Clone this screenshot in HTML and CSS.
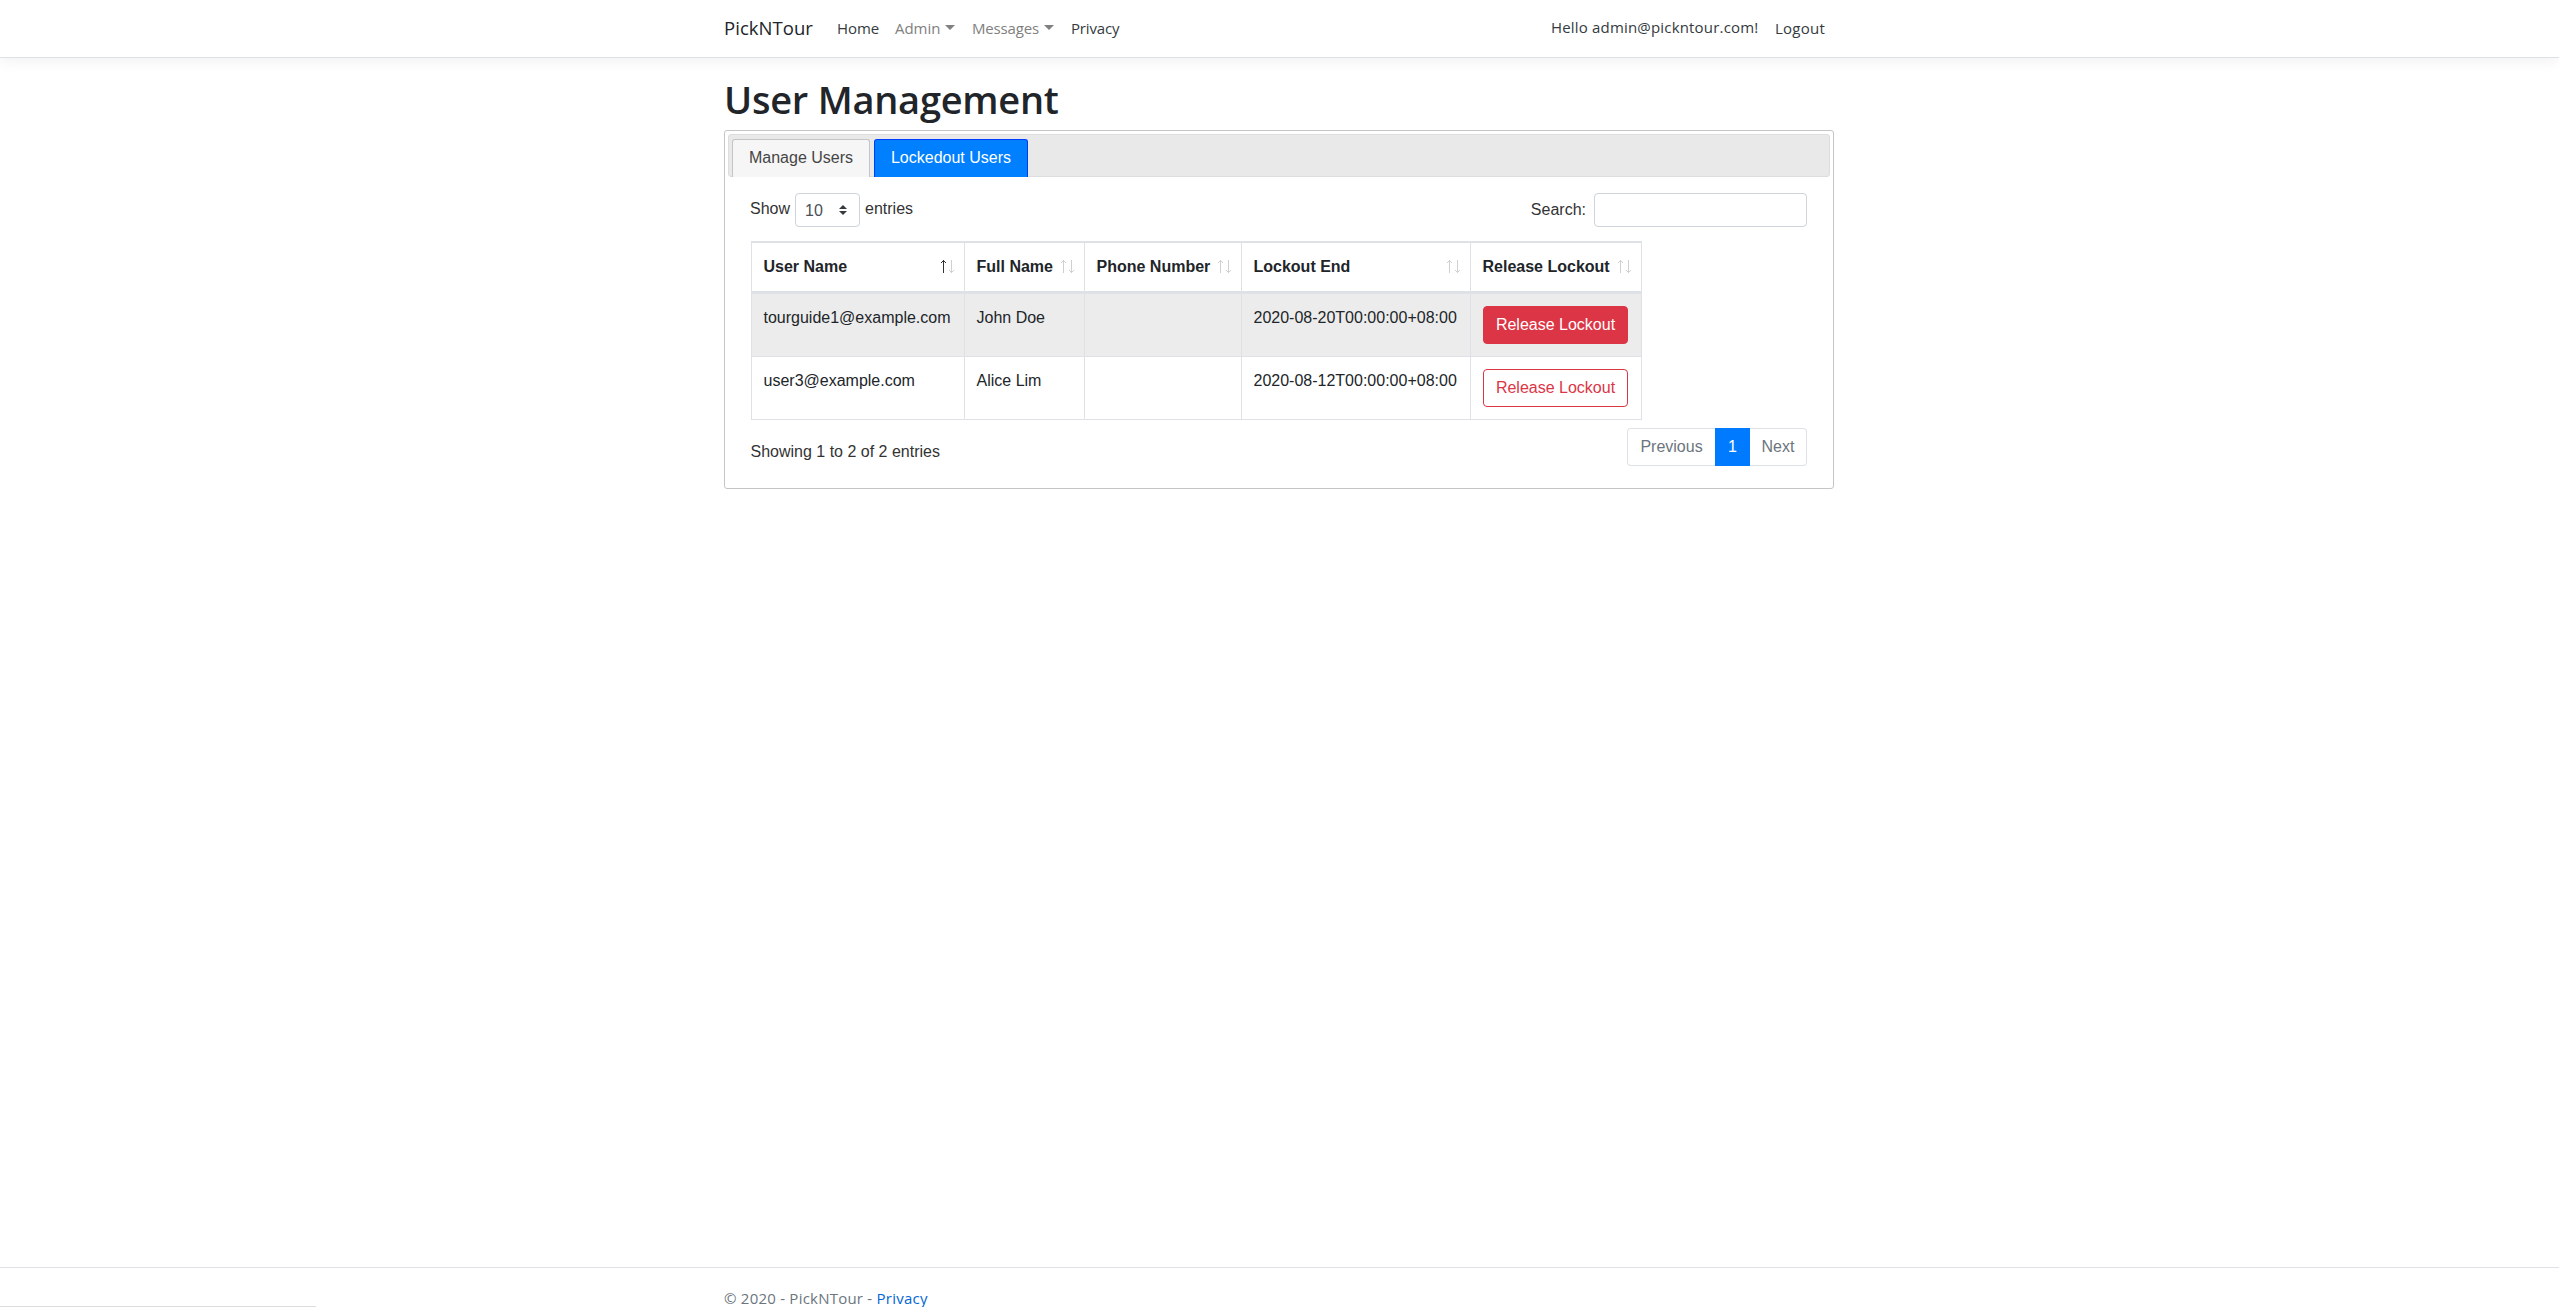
FILE: index.html
```html
<!DOCTYPE html>
<html lang="en">
<head>
<meta charset="utf-8">
<title>User Management - PickNTour</title>
<link rel="stylesheet" href="styles.css">
</head>
<body>
<header class="site-header">
  <nav class="container navbar">
    <a class="brand">PickNTour</a>
    <a class="nav-link home">Home</a>
    <a class="nav-link muted admin">Admin<i class="caret"></i></a>
    <a class="nav-link muted messages">Messages<i class="caret"></i></a>
    <a class="nav-link privacy">Privacy</a>
    <span class="hello">Hello admin@pickntour.com!</span>
    <a class="nav-link logout">Logout</a>
  </nav>
</header>
<main class="container main">
  <h1><span>User Management</span></h1>
  <section class="tabs">
    <div class="tab-bar">
      <a class="tab first">Manage Users</a>
      <a class="tab active">Lockedout Users</a>
    </div>
    <div class="panel">
      <div class="controls">
        <label class="length">Show
          <span class="select">10
            <svg width="8" height="10" viewBox="0 0 4 5"><path fill="#343a40" d="M2 0L0 2h4zm0 5L0 3h4z"/></svg>
          </span>
          entries</label>
        <label class="search">Search:<input type="text"></label>
      </div>
      <table>
        <colgroup><col class="c-user"><col class="c-name"><col class="c-phone"><col class="c-end"><col class="c-release"></colgroup>
        <thead>
          <tr>
            <th><div>User Name<svg class="sort" width="14" height="13" viewBox="0 0 14 13"><g class="on"><path d="M3.5 0v13"/><path d="M1 3L3.5 .5L6 3"/></g><g><path d="M11.5 0v13"/><path d="M9 10l2.5 2.5l2.5-2.5"/></g></svg></div></th>
            <th><div>Full Name<svg class="sort" width="14" height="13" viewBox="0 0 14 13"><g><path d="M3.5 0v13"/><path d="M1 3L3.5 .5L6 3"/></g><g><path d="M11.5 0v13"/><path d="M9 10l2.5 2.5l2.5-2.5"/></g></svg></div></th>
            <th><div>Phone Number<svg class="sort" width="14" height="13" viewBox="0 0 14 13"><g><path d="M3.5 0v13"/><path d="M1 3L3.5 .5L6 3"/></g><g><path d="M11.5 0v13"/><path d="M9 10l2.5 2.5l2.5-2.5"/></g></svg></div></th>
            <th><div>Lockout End<svg class="sort" width="14" height="13" viewBox="0 0 14 13"><g><path d="M3.5 0v13"/><path d="M1 3L3.5 .5L6 3"/></g><g><path d="M11.5 0v13"/><path d="M9 10l2.5 2.5l2.5-2.5"/></g></svg></div></th>
            <th><div>Release Lockout<svg class="sort" width="14" height="13" viewBox="0 0 14 13"><g><path d="M3.5 0v13"/><path d="M1 3L3.5 .5L6 3"/></g><g><path d="M11.5 0v13"/><path d="M9 10l2.5 2.5l2.5-2.5"/></g></svg></div></th>
          </tr>
        </thead>
        <tbody>
          <tr class="hover"><td>tourguide1@example.com</td><td>John Doe</td><td></td><td>2020-08-20T00:00:00+08:00</td><td><button class="btn solid">Release Lockout</button></td></tr>
          <tr><td>user3@example.com</td><td>Alice Lim</td><td></td><td>2020-08-12T00:00:00+08:00</td><td><button class="btn">Release Lockout</button></td></tr>
        </tbody>
      </table>
      <div class="table-footer">
        <div class="info">Showing 1 to 2 of 2 entries</div>
        <div class="pagination"><a class="prev">Previous</a><a class="current">1</a><a class="next">Next</a></div>
      </div>
    </div>
  </section>
</main>
<footer class="site-footer">
  <div class="container"><span>© 2020 - PickNTour - <a>Privacy</a></span></div>
</footer>
<div class="status-bubble"></div>
</body>
</html>
```
FILE: styles.css
```css
* { box-sizing: border-box; }
html, body { height: 100%; }
body {
  margin: 0;
  display: flex;
  flex-direction: column;
  height: 1307px;
  overflow: hidden;
  background: #fff;
  color: #212529;
  font: 16px/24px "Open Sans", "Noto Sans", sans-serif;
}
.container { width: 1111px; margin-left: 724px; }
.site-header {
  flex: none;
  height: 58px;
  border-bottom: 1px solid #dee2e6;
  box-shadow: 0 4px 12px rgba(0, 0, 0, .05);
}
.navbar { display: flex; align-items: center; height: 57px; padding-bottom: 1px; white-space: nowrap; font-size: 15px; }
.brand { width: 113px; font-size: 18.5px; letter-spacing: .05px; }
.nav-link { color: #343a40; letter-spacing: -.05px; }
.home { width: 58px; }
.admin { width: 77px; }
.messages { width: 99px; }
.nav-link.messages, .nav-link.privacy { letter-spacing: -.15px; }
.nav-link.logout { letter-spacing: .25px; }
.nav-link.muted { color: #808080; }
.caret {
  display: inline-block;
  margin-left: 5px;
  vertical-align: 4px;
  border: 5px solid transparent;
  border-top-color: #808080;
  border-bottom: 0;
}
.hello { margin-left: auto; width: 224px; padding-bottom: 2px; color: #343a40; letter-spacing: .18px; }
.logout { width: 60px; }
.main { flex: 1; padding-top: 18px; }
h1 { margin: 0; height: 54px; font-size: 38px; font-weight: 600; line-height: 47px; letter-spacing: -.25px; white-space: nowrap; }
.tabs {
  height: 359px;
  width: 1110px;
  padding: 3px;
  border: 1px solid #c5c5c5;
  border-radius: 3px;
  color: #333;
  font-family: "Liberation Sans", Arial, sans-serif;
}
.tab-bar {
  display: flex;
  gap: 4px;
  height: 43px;
  padding: 4px 3px 0;
  border: 1px solid #ddd;
  border-radius: 3px;
  background: #e9e9e9;
}
.tab {
  width: 154px;
  height: 38px;
  border: 1px solid #c5c5c5;
  border-bottom: 0;
  border-radius: 3px 3px 0 0;
  background: #f6f6f6;
  color: #454545;
  line-height: 36px;
  text-align: center;
}
.tab.first { width: 138px; }
.tab.active { background: #007fff; border-color: #003eff; color: #fff; }
.panel { padding: 16px 23px 0 23px; }
.controls { display: flex; justify-content: space-between; height: 48px; }
.length { display: flex; gap: 5px; height: 31px; margin-left: -1px; line-height: 31px; }
.select {
  display: flex;
  align-items: center;
  justify-content: space-between;
  width: 65px;
  height: 34px;
  padding: 0 12px 0 9px;
  border: 1px solid #ced4da;
  border-radius: 4px;
  color: #495057;
}
.search { display: flex; align-items: center; gap: 8px; height: 34px; margin-right: 0; line-height: 32px; }
.search input { width: 213px; height: 34px; border: 1px solid #ced4da; border-radius: 4px; background: #fff; }
table {
  width: 891px;
  table-layout: fixed;
  border-spacing: 0;
  border-left: 1px solid #dee2e6;
  border-top: 2px solid #dee2e6;
  color: #212529;
}
.c-user { width: 213px; }
.c-name { width: 120px; }
.c-phone { width: 157px; }
.c-end { width: 229px; }
.c-release { width: 171px; }
th, td { padding: 12px 0 0 11.5px; border-right: 1px solid #dee2e6; border-bottom: 1px solid #dee2e6; text-align: left; vertical-align: top; white-space: nowrap; }
td:last-child { padding-left: 12px; }
th { height: 51px; border-bottom-width: 3px; }
th div { display: flex; justify-content: space-between; padding-right: 10px; }
td { height: 63px; }
.hover td { background: #ececec; }
.sort { margin-top: 5px; fill: none; stroke: #d0d0d0; stroke-width: 1; overflow: visible; }
.sort .on { stroke: #333; }
.btn {
  display: block;
  width: 145px;
  height: 38px;
  padding: 0;
  border: 1px solid #dc3545;
  border-radius: 4px;
  background: transparent;
  color: #dc3545;
  font: 16px/34px "Liberation Sans", Arial, sans-serif;
}
.btn.solid { background: #dc3545; color: #fff; }
.table-footer { display: flex; justify-content: space-between; padding-top: 8px; }
.info { margin-left: -.5px; padding-top: 12px; }
.pagination { display: flex; width: 180px; height: 38px; line-height: 35px; text-align: center; color: #6c757d; }
.pagination a { border: 1px solid #dee2e6; }
.pagination .prev { width: 88px; border-right: 0; border-radius: 4px 0 0 4px; }
.pagination .current { width: 35px; border-color: #007bff; background: #007bff; color: #fff; }
.pagination .next { width: 57px; border-left: 0; border-radius: 0 4px 4px 0; }
.site-footer { flex: none; height: 40px; border-top: 1px solid #dee2e6; color: #6c757d; font-size: 15px; line-height: 60px; letter-spacing: .23px; white-space: nowrap; }
.site-footer a { color: #0366d6; }
.status-bubble { position: absolute; left: 0; bottom: 0; width: 316px; height: 1px; background: #dcdcdc; }
```
